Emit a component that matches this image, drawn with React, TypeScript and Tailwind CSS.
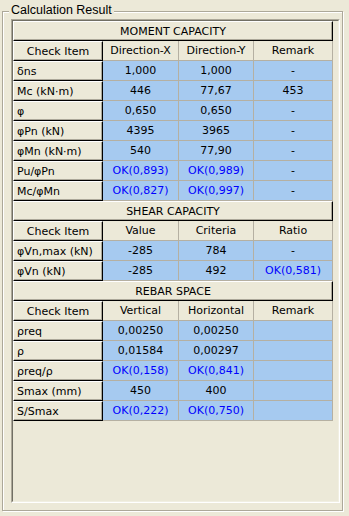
import React from 'react'

type Row = { item: string; values: string[] }
type Section = { title: string; headers: string[]; rows: Row[] }

const sections: Section[] = [
  {
    title: 'MOMENT CAPACITY',
    headers: ['Direction-X', 'Direction-Y', 'Remark'],
    rows: [
      { item: 'δns', values: ['1,000', '1,000', '-'] },
      { item: 'Mc (kN·m)', values: ['446', '77,67', '453'] },
      { item: 'φ', values: ['0,650', '0,650', '-'] },
      { item: 'φPn (kN)', values: ['4395', '3965', '-'] },
      { item: 'φMn (kN·m)', values: ['540', '77,90', '-'] },
      { item: 'Pu/φPn', values: ['OK(0,893)', 'OK(0,989)', '-'] },
      { item: 'Mc/φMn', values: ['OK(0,827)', 'OK(0,997)', '-'] },
    ],
  },
  {
    title: 'SHEAR CAPACITY',
    headers: ['Value', 'Criteria', 'Ratio'],
    rows: [
      { item: 'φVn,max (kN)', values: ['-285', '784', '-'] },
      { item: 'φVn (kN)', values: ['-285', '492', 'OK(0,581)'] },
    ],
  },
  {
    title: 'REBAR SPACE',
    headers: ['Vertical', 'Horizontal', 'Remark'],
    rows: [
      { item: 'ρreq', values: ['0,00250', '0,00250', ''] },
      { item: 'ρ', values: ['0,01584', '0,00297', ''] },
      { item: 'ρreq/ρ', values: ['OK(0,158)', 'OK(0,841)', ''] },
      { item: 'Smax (mm)', values: ['450', '400', ''] },
      { item: 'S/Smax', values: ['OK(0,222)', 'OK(0,750)', ''] },
    ],
  },
]

// widths of the three value columns
const colW = ['w-[76px]', 'w-[75px]', 'w-[79px]']

const fixed =
  'h-[20px] bg-[#ece9d8] border-t border-l border-white border-b border-r border-b-black border-r-black shadow-[inset_-1px_-1px_0_#aca899]'

function FixedCell({ children, center }: { children: React.ReactNode; center?: boolean }) {
  return (
    <div
      className={`${fixed} w-[90px] shrink-0 flex items-center whitespace-nowrap ${
        center ? 'justify-center' : 'pl-[3px]'
      }`}
    >
      {children}
    </div>
  )
}

function ValueCell({ text, idx, header }: { text: string; idx: number; header?: boolean }) {
  const ok = text.startsWith('OK')
  return (
    <div
      className={`${colW[idx]} shrink-0 h-[20px] flex items-center justify-center border-r border-b border-[#b5b0a2] whitespace-nowrap ${
        header ? 'bg-[#ece9d8]' : 'bg-[#a6caf0]'
      } ${ok ? 'text-[#0000ff]' : 'text-black'}`}
    >
      {text}
    </div>
  )
}

export default function App() {
  return (
    <div
      className="w-[349px] h-[516px] bg-[#ece9d8] text-black overflow-hidden"
      style={{ fontFamily: '"DejaVu Sans", sans-serif' }}
    >
      <div className="pt-[11px] pl-[2px]">
        <div className="relative w-[341px] h-[500px] border border-[#aca899] shadow-[inset_1px_1px_0_#ffffff,1px_1px_0_#ffffff]">
          <span
            className="absolute left-[6px] top-[-9px] px-[2px] bg-[#ece9d8] text-[12.5px] leading-[14px] whitespace-nowrap"
            style={{ fontFamily: '"Liberation Sans", Arial, sans-serif' }}
          >
            Calculation Result
          </span>

          <div className="ml-[8px] mt-[7px] w-[329px] h-[484px] border border-t-[#aca899] border-l-[#aca899] border-b-white border-r-white">
            <div className="h-full border border-t-[#716f64] border-l-[#716f64] border-b-[#f1efe2] border-r-[#f1efe2] text-[11px] leading-none">
              <div className="w-[320px] flex flex-col">
                {sections.map((sec) => (
                  <React.Fragment key={sec.title}>
                    <div className={`${fixed} w-[320px] flex items-center justify-center`}>{sec.title}</div>
                    <div className="flex">
                      <FixedCell center>Check Item</FixedCell>
                      {sec.headers.map((h, i) => (
                        <ValueCell key={h + i} text={h} idx={i} header />
                      ))}
                    </div>
                    {sec.rows.map((r) => (
                      <div key={r.item} className="flex">
                        <FixedCell>{r.item}</FixedCell>
                        {r.values.map((v, i) => (
                          <ValueCell key={i} text={v} idx={i} />
                        ))}
                      </div>
                    ))}
                  </React.Fragment>
                ))}
              </div>
            </div>
          </div>
        </div>
      </div>
    </div>
  )
}
